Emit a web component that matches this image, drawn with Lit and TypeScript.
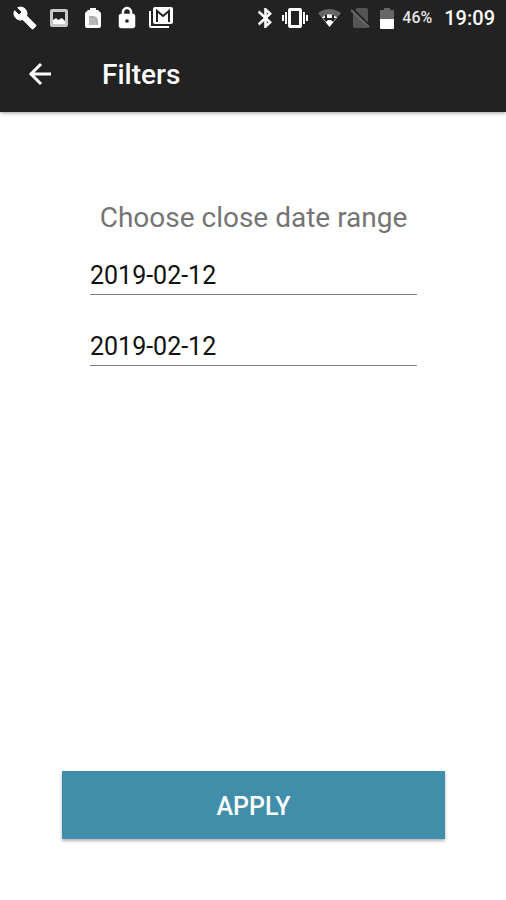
import { LitElement, html, css } from "lit";
import { customElement, state } from "lit/decorators.js";

@customElement("status-bar")
export class StatusBar extends LitElement {
  static styles = css`
    :host {
      display: flex;
      align-items: center;
      justify-content: space-between;
      height: 36px;
      padding: 0 11px 0 8px;
      color: #fff;
      font-family: Roboto, sans-serif;
    }
    .notifications,
    .icons,
    .system {
      display: flex;
      align-items: center;
    }
    .notifications svg {
      width: 34px;
      height: 24px;
    }
    .icons {
      gap: 10px;
    }
    .system {
      gap: 8px;
    }
    svg {
      display: block;
      fill: #fff;
    }
    .dim {
      fill: #666;
    }
    .soft {
      fill: #c8c8c8;
    }
    .line {
      fill: none;
      stroke: #222;
      stroke-width: 2;
    }
    .dimline {
      fill: none;
      stroke: #666;
      stroke-width: 2;
    }
    .percent {
      font-size: 16px;
      line-height: 20px;
      font-weight: 500;
      color: #e4e4e4;
    }
    .clock {
      font-size: 20px;
      line-height: 20px;
      font-weight: 500;
      margin-left: 4px;
    }
  `;

  render() {
    return html`
      <div class="notifications">
        <svg viewBox="0 0 24 24" aria-hidden="true">
          <path d="M22.7 19l-9.1-9.1c.9-2.3.4-5-1.5-6.9-2-2-5-2.4-7.4-1.3L9 6 6 9 1.6 4.7C.4 7.1.9 10.1 2.9 12.1c1.9 1.9 4.6 2.4 6.9 1.5l9.1 9.1c.4.4 1 .4 1.4 0l2.3-2.3c.5-.4.5-1.1.1-1.4z" stroke="#fff" />
        </svg>
        <svg viewBox="0 0 24 24" aria-hidden="true">
          <path class="soft" fill-rule="evenodd" d="M5 3h14a2 2 0 0 1 2 2v14a2 2 0 0 1-2 2H5a2 2 0 0 1-2-2V5a2 2 0 0 1 2-2zM6 6v11h12V6z" />
          <path d="M6 18v-4l3-2 2 2 4-2 3 3v3z" />
        </svg>
        <svg viewBox="0 0 24 24" aria-hidden="true">
          <path d="M9 2h6v2h2l3 3v13a2 2 0 0 1-2 2H6a2 2 0 0 1-2-2V7l3-3h2z" />
          <path d="M8 10h4a5 5 0 0 1 5 5v4H8z" fill="#b0b0b0" />
          <path d="M8 13.5h3a3 3 0 0 1 3 3V19M8 16.5h2a1 1 0 0 1 1 1V19" fill="none" stroke="#ccc" />
        </svg>
        <svg viewBox="0 0 24 24" aria-hidden="true">
          <path d="M18 8h-1V6c0-2.76-2.24-5-5-5S7 3.24 7 6v2H6c-1.1 0-2 .9-2 2v10c0 1.1.9 2 2 2h12c1.1 0 2-.9 2-2V10c0-1.1-.9-2-2-2zm-6 9c-1.1 0-2-.9-2-2s.9-2 2-2 2 .9 2 2-.9 2-2 2zm3.1-9H8.9V6c0-1.71 1.39-3.1 3.1-3.1 1.71 0 3.1 1.39 3.1 3.1v2z" stroke="#fff" stroke-width=".5" />
        </svg>
        <svg viewBox="0 0 24 24" aria-hidden="true">
          <path d="M0 5h2v15h18v2H2a2 2 0 0 1-2-2z" />
          <rect x="4" y="1" width="20" height="17" rx="2" />
          <path class="line" d="M8 16V5l6 5 6-5v11" />
        </svg>
      </div>
      <div class="system">
        <div class="icons">
          <svg width="14" height="20" viewBox="5 2 13 20" preserveAspectRatio="none" aria-hidden="true">
            <path stroke="#fff" stroke-width=".6" d="M17.71 7.71L12 2h-1v7.59L6.41 5 5 6.41 10.59 12 5 17.59 6.41 19 11 14.41V22h1l5.71-5.71-4.3-4.29 4.3-4.29zM13 5.83l1.88 1.88L13 9.59V5.83zm1.88 10.46L13 18.17v-3.76l1.88 1.88z" />
          </svg>
          <svg width="26" height="20" viewBox="0 0 26 20" aria-hidden="true">
            <path fill-rule="evenodd" d="M0 7h2v6H0zM3 4h2v12H3zM21 4h2v12h-2zM24 7h2v6h-2zM8 0h10a2 2 0 0 1 2 2v16a2 2 0 0 1-2 2H8a2 2 0 0 1-2-2V2a2 2 0 0 1 2-2zM9 3v14h8V3z" />
          </svg>
          <svg width="23" height="18" viewBox="0 0 23 18" aria-hidden="true">
            <path class="dim" d="M11.5 18L0 4Q11.5-4 23 4z" />
            <path d="M11.5 18L4 8.5Q11.5 2 19 8.5z" />
            <path fill="#222" d="M7 6h2v3h5V6h2v3h2l-3 4-2-2h-3l-2 2-3-4h2z" />
          </svg>
          <svg width="19" height="20" viewBox="0 0 19 20" aria-hidden="true">
            <path fill="#555" d="M6 0h9a2 2 0 0 1 2 2v16a2 2 0 0 1-2 2H4a2 2 0 0 1-2-2V4z" />
            <path class="line" d="M2 1l17 17" />
            <path class="dimline" d="M0 2l18 17" />
          </svg>
          <svg width="14" height="21" viewBox="0 0 14 21" aria-hidden="true">
            <path class="dim" d="M4 0h6v2h4v9H0V2h4z" />
            <path d="M0 11h14v9a1 1 0 0 1-1 1H1a1 1 0 0 1-1-1z" />
          </svg>
        </div>
        <span class="percent">46%</span>
        <span class="clock">19:09</span>
      </div>
    `;
  }
}

@customElement("app-root")
export class AppRoot extends LitElement {
  @state() private from = "2019-02-12";
  @state() private to = "2019-02-12";

  static styles = css`
    :host {
      display: flex;
      flex-direction: column;
      min-height: 100vh;
      background: #fff;
      font-family: Roboto, sans-serif;
    }
    * {
      box-sizing: border-box;
    }
    header {
      background: #222;
      color: #fff;
      box-shadow: 0 1px 4px rgba(0, 0, 0, 0.4);
    }
    .toolbar {
      display: flex;
      align-items: center;
      gap: 38px;
      height: 76px;
      padding: 0 16px;
    }
    .back {
      width: 48px;
      height: 48px;
      padding: 0;
      border: 0;
      background: none;
      display: grid;
      place-items: center;
    }
    h1 {
      margin: 0;
      padding-top: 2px;
      font-size: 28px;
      line-height: 32px;
      font-weight: 500;
    }
    form {
      flex: 1;
      display: flex;
      flex-direction: column;
      padding: 86px 61px 61px 62px;
    }
    fieldset {
      margin: 0 28px;
      padding: 0;
      border: 0;
      min-width: 0;
    }
    legend {
      padding: 0;
      width: 100%;
      text-align: center;
      white-space: nowrap;
      font-size: 28px;
      line-height: 40px;
      color: #757575;
      margin-bottom: 16px;
    }
    .date {
      display: block;
      width: 100%;
      height: 41px;
      margin-bottom: 30px;
      padding: 2px 0 0;
      border: 0;
      border-bottom: 1px solid #808080;
      border-radius: 0;
      outline: 0;
      background: none;
      color: #111;
      font-family: inherit;
      font-size: 25px;
      line-height: 32px;
    }
    .apply {
      margin-top: auto;
      height: 68px;
      padding: 2px 0 0;
      border: 0;
      background: #418eab;
      color: #fff;
      font-family: inherit;
      font-size: 25px;
      font-weight: 500;
      box-shadow: 0 2px 3px rgba(0, 0, 0, 0.3);
    }
  `;

  render() {
    return html`
      <header>
        <status-bar></status-bar>
        <div class="toolbar">
          <button class="back" type="button" aria-label="Back">
            <svg width="24" height="24" viewBox="0 0 24 24" aria-hidden="true">
              <path d="M23 12H2M13 2L3 12l10 10" fill="none" stroke="#fff" stroke-width="3" />
            </svg>
          </button>
          <h1>Filters</h1>
        </div>
      </header>
      <form @submit=${(e: Event) => e.preventDefault()}>
        <fieldset>
          <legend>Choose close date range</legend>
          <input
            class="date"
            type="text"
            aria-label="From date"
            .value=${this.from}
            @input=${(e: Event) => (this.from = (e.target as HTMLInputElement).value)}
          />
          <input
            class="date"
            type="text"
            aria-label="To date"
            .value=${this.to}
            @input=${(e: Event) => (this.to = (e.target as HTMLInputElement).value)}
          />
        </fieldset>
        <button class="apply" type="submit">APPLY</button>
      </form>
    `;
  }
}
